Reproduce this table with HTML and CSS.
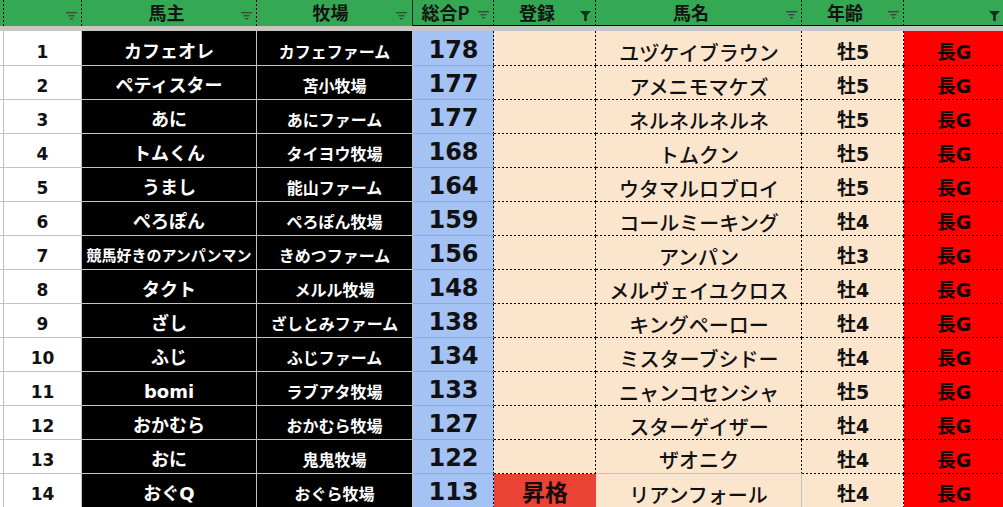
FILE: index.html
```html
<!DOCTYPE html>
<html lang="ja">
<head>
<meta charset="utf-8">
<title>馬主ランキング</title>
<link rel="stylesheet" href="styles.css">
</head>
<body>
<div class="sheet">
  <div class="row hdr">
    <div class="h edge"></div>
    <div class="h"><span class="ht"></span><svg class="fi" viewBox="0 0 11 8"><rect x="0" y="0" width="11" height="1.4"/><rect x="2.5" y="3" width="6" height="1.4"/><rect x="4" y="6" width="3" height="1.4"/></svg></div>
    <div class="h hb"><span class="ht">馬主</span><svg class="fi" viewBox="0 0 11 8"><rect x="0" y="0" width="11" height="1.4"/><rect x="2.5" y="3" width="6" height="1.4"/><rect x="4" y="6" width="3" height="1.4"/></svg></div>
    <div class="h hc"><span class="ht">牧場</span><svg class="fi" viewBox="0 0 11 8"><rect x="0" y="0" width="11" height="1.4"/><rect x="2.5" y="3" width="6" height="1.4"/><rect x="4" y="6" width="3" height="1.4"/></svg></div>
    <div class="h line"><span class="ht">総合P</span><svg class="fi" viewBox="0 0 11 8"><rect x="0" y="0" width="11" height="1.4"/><rect x="2.5" y="3" width="6" height="1.4"/><rect x="4" y="6" width="3" height="1.4"/></svg></div>
    <div class="h line"><span class="ht">登録</span><svg class="ff" viewBox="0 0 11 10"><path d="M0 0H11L6.8 4.6V10H4.2V4.6Z"/></svg></div>
    <div class="h line"><span class="ht">馬名</span><svg class="fi" viewBox="0 0 11 8"><rect x="0" y="0" width="11" height="1.4"/><rect x="2.5" y="3" width="6" height="1.4"/><rect x="4" y="6" width="3" height="1.4"/></svg></div>
    <div class="h line"><span class="ht">年齢</span><svg class="fi" viewBox="0 0 11 8"><rect x="0" y="0" width="11" height="1.4"/><rect x="2.5" y="3" width="6" height="1.4"/><rect x="4" y="6" width="3" height="1.4"/></svg></div>
    <div class="h line hlast"><span class="ht"></span><svg class="ff" viewBox="0 0 11 10"><path d="M0 0H11L6.8 4.6V10H4.2V4.6Z"/></svg></div>
  </div>
  <div class="band"></div>

  <div class="row first"><div class="c edge"></div><div class="c num">1</div><div class="c own">カフェオレ</div><div class="c farm">カフェファーム</div><div class="c pt">178</div><div class="c reg"></div><div class="c horse">ユヅケイブラウン</div><div class="c age">牡5</div><div class="c dist">長G</div></div>
  <div class="row"><div class="c edge"></div><div class="c num">2</div><div class="c own">ペティスター</div><div class="c farm">苫小牧場</div><div class="c pt">177</div><div class="c reg"></div><div class="c horse">アメニモマケズ</div><div class="c age">牡5</div><div class="c dist">長G</div></div>
  <div class="row"><div class="c edge"></div><div class="c num">3</div><div class="c own">あに</div><div class="c farm">あにファーム</div><div class="c pt">177</div><div class="c reg"></div><div class="c horse">ネルネルネルネ</div><div class="c age">牡5</div><div class="c dist">長G</div></div>
  <div class="row"><div class="c edge"></div><div class="c num">4</div><div class="c own">トムくん</div><div class="c farm">タイヨウ牧場</div><div class="c pt">168</div><div class="c reg"></div><div class="c horse">トムクン</div><div class="c age">牡5</div><div class="c dist">長G</div></div>
  <div class="row"><div class="c edge"></div><div class="c num">5</div><div class="c own">うまし</div><div class="c farm">能山ファーム</div><div class="c pt">164</div><div class="c reg"></div><div class="c horse">ウタマルロブロイ</div><div class="c age">牡5</div><div class="c dist">長G</div></div>
  <div class="row"><div class="c edge"></div><div class="c num">6</div><div class="c own">ぺろぽん</div><div class="c farm">ぺろぽん牧場</div><div class="c pt">159</div><div class="c reg"></div><div class="c horse">コールミーキング</div><div class="c age">牡4</div><div class="c dist">長G</div></div>
  <div class="row"><div class="c edge"></div><div class="c num">7</div><div class="c own small">競馬好きのアンパンマン</div><div class="c farm">きめつファーム</div><div class="c pt">156</div><div class="c reg"></div><div class="c horse">アンパン</div><div class="c age">牡3</div><div class="c dist">長G</div></div>
  <div class="row"><div class="c edge"></div><div class="c num">8</div><div class="c own">タクト</div><div class="c farm">メルル牧場</div><div class="c pt">148</div><div class="c reg"></div><div class="c horse">メルヴェイユクロス</div><div class="c age">牡4</div><div class="c dist">長G</div></div>
  <div class="row"><div class="c edge"></div><div class="c num">9</div><div class="c own">ざし</div><div class="c farm">ざしとみファーム</div><div class="c pt">138</div><div class="c reg"></div><div class="c horse">キングペーロー</div><div class="c age">牡4</div><div class="c dist">長G</div></div>
  <div class="row"><div class="c edge"></div><div class="c num">10</div><div class="c own">ふじ</div><div class="c farm">ふじファーム</div><div class="c pt">134</div><div class="c reg"></div><div class="c horse">ミスターブシドー</div><div class="c age">牡4</div><div class="c dist">長G</div></div>
  <div class="row"><div class="c edge"></div><div class="c num">11</div><div class="c own">bomi</div><div class="c farm">ラブアタ牧場</div><div class="c pt">133</div><div class="c reg"></div><div class="c horse">ニャンコセンシャ</div><div class="c age">牡5</div><div class="c dist">長G</div></div>
  <div class="row"><div class="c edge"></div><div class="c num">12</div><div class="c own">おかむら</div><div class="c farm">おかむら牧場</div><div class="c pt">127</div><div class="c reg"></div><div class="c horse">スターゲイザー</div><div class="c age">牡4</div><div class="c dist">長G</div></div>
  <div class="row"><div class="c edge"></div><div class="c num">13</div><div class="c own">おに</div><div class="c farm">鬼鬼牧場</div><div class="c pt">122</div><div class="c reg"></div><div class="c horse gray-b">ザオニク</div><div class="c age">牡4</div><div class="c dist">長G</div></div>
  <div class="row"><div class="c edge"></div><div class="c num">14</div><div class="c own">おぐQ</div><div class="c farm">おぐら牧場</div><div class="c pt">113</div><div class="c reg up">昇格</div><div class="c horse gray-r">リアンフォール</div><div class="c age">牡4</div><div class="c dist">長G</div></div>
</div>
</body>
</html>
```

FILE: styles.css
```css
:root {
  --cols: 4px 78px 175px 156px 81px 102px 206px 102px 100px;
  --dash-h: repeating-linear-gradient(to right, #000 0 2px, transparent 2px 4px);
  --dash-v: repeating-linear-gradient(to bottom, #000 0 2px, transparent 2px 4px);
  --grid: #c3c3c3;
}

html, body {
  margin: 0;
  padding: 0;
  background: #fff;
}

body {
  width: 1003px;
  height: 507px;
  overflow: hidden;
  font-family: "DejaVu Sans", "Noto Sans CJK JP", sans-serif;
  color: #000;
}

.sheet {
  width: 1004px;
}

.row {
  display: grid;
  grid-template-columns: var(--cols);
  height: 34px;
}

.row.first {
  height: 35px;
}

.row.hdr {
  height: 26px;
}

.band {
  height: 5px;
  background: #c6c6c6;
}

/* header */
.h {
  box-sizing: border-box;
  display: flex;
  align-items: center;
  padding-right: 5px;
  background-color: #34a853;
  background-image: var(--dash-v);
  background-size: 1px 100%;
  background-position: right top;
  background-repeat: no-repeat;
  font-family: "Noto Sans CJK JP", sans-serif;
  font-weight: bold;
  font-size: 18px;
  line-height: 1;
  color: #141414;
}

.h.edge {
  padding: 0;
}

.h.hc {
  background-image: none;
  border-right: 1px solid #1d2b20;
}

.h.line {
  border-bottom: 1px solid #000;
}

.h.hlast {
  background-image: none;
  padding-right: 4px;
}

.ht {
  flex: 1;
  text-align: center;
  padding-bottom: 2px;
  white-space: nowrap;
}

.hb .ht {
  padding-left: 10px;
}

.hc .ht {
  padding-left: 8px;
}

.fi {
  width: 11px;
  height: 8px;
  align-self: flex-end;
  margin-bottom: 6px;
  fill: #3b4a3e;
}

.ff {
  width: 11px;
  height: 10px;
  align-self: flex-end;
  margin-bottom: 4px;
  fill: #16301b;
}

/* body cells */
.c {
  box-sizing: border-box;
  display: flex;
  align-items: flex-end;
  justify-content: center;
  padding-bottom: 4px;
  line-height: 1;
  font-weight: bold;
  white-space: nowrap;
  overflow: hidden;
}

.c.edge {
  background: #fff;
  border-right: 1px solid var(--grid);
  border-bottom: 1px solid var(--grid);
}

.num {
  background: #fff;
  border-right: 1px solid var(--grid);
  border-bottom: 1px solid var(--grid);
  font-size: 17px;
  color: #111;
}

.own {
  background: #000;
  color: #fff;
  border-right: 1px solid var(--grid);
  border-bottom: 1px solid var(--grid);
  font-size: 18px;
}

.own.small {
  font-size: 15px;
  padding-bottom: 5px;
}

.farm {
  background: #000;
  color: #fff;
  border-right: 1px solid var(--grid);
  border-bottom: 1px solid var(--grid);
  font-size: 16px;
}

.pt {
  background-color: #a4c2f4;
  border-bottom: 1px solid #8faad8;
  background-image: var(--dash-v);
  background-size: 1px 100%;
  background-position: right top;
  background-repeat: no-repeat;
  font-size: 24px;
  color: #111;
  padding-bottom: 3px;
}

.reg,
.horse,
.age,
.dist {
  background-color: #fce5cd;
  background-image: var(--dash-h), var(--dash-v);
  background-size: 100% 1px, 1px 100%;
  background-position: left bottom, right top;
  background-repeat: no-repeat;
}

.reg.up {
  background-color: #ea4335;
  background-image: none;
  font-size: 23px;
  color: #1a0a08;
  padding-bottom: 3px;
}

.horse {
  font-family: "Noto Sans CJK JP", sans-serif;
  font-weight: 500;
  font-size: 20px;
  color: #111;
  padding-bottom: 3px;
}

.horse.gray-b {
  background-image: var(--dash-v);
  background-size: 1px 100%;
  background-position: right top;
  border-bottom: 1px solid var(--grid);
}

.horse.gray-r {
  background-image: var(--dash-h);
  background-size: 100% 1px;
  background-position: left bottom;
  border-right: 1px solid var(--grid);
}

.age {
  font-size: 19px;
  color: #111;
}

.dist {
  background-color: #ff0000;
  background-image: var(--dash-h);
  background-size: 100% 1px;
  background-position: left bottom;
  font-size: 19px;
  color: #140000;
}
```
